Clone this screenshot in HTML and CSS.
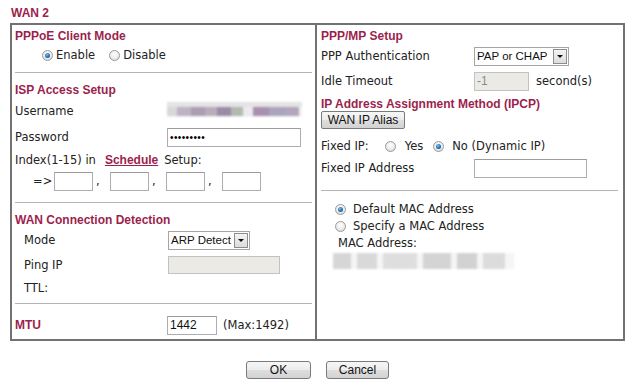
FILE: index.html
```html
<!DOCTYPE html>
<html lang="en">
<head>
  <meta charset="UTF-8" />
  <title>WAN 2 - PPPoE</title>
  <link rel="stylesheet" href="styles.css">
</head>
<body>
  <div class="page">
    <div class="title">WAN 2</div>

    <div class="panel">
      <!-- left side -->
      <div class="col col-left">
        <div class="head h20">PPPoE Client Mode</div>
        <div class="row h20 mode-opts">
          <span class="opt"><span class="radio on"></span>Enable</span>
          <span class="opt"><span class="radio"></span>Disable</span>
        </div>
        <div class="sep sep-1"></div>

        <div class="head h20">ISP Access Setup</div>
        <div class="row h24">
          <span class="label">Username</span>
          <span class="blur blur-user">
            <i class="b1"></i><i class="b2"></i><i class="b3"></i><i class="b4"></i><i class="b5"></i><i class="b6"></i><i class="b7"></i><i class="b8"></i><i class="b9"></i><i class="b10"></i>
          </span>
        </div>
        <div class="row h28">
          <span class="label">Password</span>
          <span class="box w134 pass">•••••••••</span>
        </div>
        <div class="row h18">
          <span>Index(1-15) in</span><a class="link" href="#">Schedule</a><span>Setup:</span>
        </div>
        <div class="row h24 index-row">
          <span class="arrow">=&gt;</span>
          <span class="box w39"></span><span class="comma">,</span>
          <span class="box w39"></span><span class="comma">,</span>
          <span class="box w39"></span><span class="comma">,</span>
          <span class="box w39"></span>
        </div>
        <div class="sep sep-2"></div>

        <div class="head h16">WAN Connection Detection</div>
        <div class="row h26">
          <span class="label sub">Mode</span>
          <span class="select w82 h18b">ARP Detect<span class="drop"></span></span>
        </div>
        <div class="row h24">
          <span class="label sub">Ping IP</span>
          <span class="box w112 h18b off"></span>
        </div>
        <div class="row h22">
          <span class="label sub">TTL:</span>
        </div>
        <div class="sep sep-3"></div>

        <div class="row h28">
          <span class="label mtu">MTU</span>
          <span class="box w50 val">1442</span>
          <span class="after">(Max:1492)</span>
        </div>
      </div>

      <!-- right side -->
      <div class="col col-right">
        <div class="head h20">PPP/MP Setup</div>
        <div class="row h22">
          <span class="label wide">PPP Authentication</span>
          <span class="select w95">PAP or CHAP<span class="drop"></span></span>
        </div>
        <div class="row h28">
          <span class="label wide">Idle Timeout</span>
          <span class="box w55 val off dim">-1</span>
          <span class="after unit">second(s)</span>
        </div>
        <div class="head h16">IP Address Assignment Method (IPCP)</div>
        <div class="row h26 top">
          <button class="btn alias">WAN IP Alias</button>
        </div>
        <div class="row h18 fixed">
          <span>Fixed IP:</span>
          <span class="opt"><span class="radio"></span>Yes</span>
          <span class="opt"><span class="radio on"></span>No (Dynamic IP)</span>
        </div>
        <div class="row h26">
          <span class="label wide">Fixed IP Address</span>
          <span class="box w113"></span>
        </div>
        <div class="sep sep-4"></div>

        <div class="row h18 mac-opt">
          <span class="opt"><span class="radio on"></span>Default MAC Address</span>
        </div>
        <div class="row h16 mac-opt">
          <span class="opt"><span class="radio"></span>Specify a MAC Address</span>
        </div>
        <div class="row h18 mac-label">MAC Address:</div>
        <div class="row h18 mac-val">
          <span class="blur blur-mac">
            <i class="m1"></i><i class="m2"></i><i class="m3"></i><i class="m4"></i><i class="m5"></i><i class="m6"></i>
          </span>
        </div>
      </div>
    </div>

    <div class="actions">
      <button class="btn ok">OK</button>
      <button class="btn cancel">Cancel</button>
    </div>
  </div>
</body>
</html>
```

FILE: styles.css
```css
* {
  box-sizing: border-box;
  margin: 0;
  padding: 0;
}

body {
  font-family: "DejaVu Sans", Verdana, sans-serif;
  font-size: 11.5px;
  color: #222;
  background: #fff;
}

.page {
  width: 640px;
  padding: 6px 10px 0;
}

.title {
  height: 17px;
  line-height: 16px;
  padding-left: 1px;
  font: bold 12px "Liberation Sans", Arial, sans-serif;
  color: #9c1f4d;
}

.panel {
  display: flex;
  width: 615px;
  height: 318px;
  border: 2px solid #727272;
}

.col-left {
  width: 305px;
  padding: 0 3px;
  border-right: 2px solid #727272;
}

.col-right {
  flex: 1;
  padding: 0 5px 0 4px;
}

.head {
  display: flex;
  align-items: center;
  padding-top: 1px;
  font: bold 12px "Liberation Sans", Arial, sans-serif;
  color: #9c1f4d;
}

.row {
  display: flex;
  align-items: center;
  white-space: nowrap;
}

.row.top {
  align-items: flex-start;
}

.h16 { height: 16px; }
.h18 { height: 18px; }
.h20 { height: 20px; }
.h22 { height: 22px; }
.h24 { height: 24px; }
.h26 { height: 26px; }
.h28 { height: 28px; }

.sep {
  border-top: 1px solid #b4b4b4;
}
.sep-1 { margin: 7px 0 6px; }
.sep-2 { margin: 9px 0 8px; }
.sep-3 { margin: 4px 0 7px; }
.sep-4 { margin: 9px 0 9px; }

.label {
  width: 152px;
  flex-shrink: 0;
}

.label.sub {
  width: 153px;
  padding-left: 9px;
}

.label.wide {
  width: 153px;
}

.label.mtu {
  font: bold 12px "Liberation Sans", Arial, sans-serif;
  color: #9c1f4d;
}

/* radio buttons */
.opt {
  display: inline-flex;
  align-items: center;
}

.radio {
  display: inline-block;
  width: 11px;
  height: 11px;
  border-radius: 50%;
  border: 1px solid #9a9a9a;
  background: radial-gradient(circle at 50% 35%, #fff 0%, #ececec 55%, #cdcdcd 100%);
  position: relative;
}

.radio.on::after {
  content: '';
  position: absolute;
  left: 2px;
  top: 2px;
  width: 5px;
  height: 5px;
  border-radius: 50%;
  background: radial-gradient(circle at 40% 35%, #7cc0ee 0%, #1f6fb5 55%, #0e3f6e 100%);
}

.mode-opts {
  padding-left: 27px;
}
.mode-opts .radio { margin-right: 3px; }
.mode-opts .opt + .opt { margin-left: 14px; }

.fixed .opt { margin-left: 16px; }
.fixed .radio { margin-right: 9px; }
.fixed .opt + .opt { margin-left: 10px; }
.fixed .opt + .opt .radio { margin-right: 8px; }

.mac-opt { padding-left: 14px; }
.mac-opt .radio { margin-right: 7px; }
.mac-label { padding-left: 17px; }
.mac-val { padding-left: 12px; }

/* text boxes */
.box {
  display: inline-block;
  height: 19px;
  border: 1px solid #abadb3;
  border-top-color: #9c9c9c;
  background: #fff;
  font: 12px "Liberation Sans", Arial, sans-serif;
  line-height: 17px;
  padding-left: 2px;
  color: #111;
  flex-shrink: 0;
}

.box.off {
  background: #ebeae5;
  border-color: #c2c2c2;
}

.box.dim {
  color: #8a8a8a;
}

.h18b { height: 18px; }

.w39 { width: 39px; }
.w50 { width: 50px; }
.w55 { width: 55px; }
.w82 { width: 82px; }
.w95 { width: 95px; }
.w112 { width: 112px; }
.w113 { width: 113px; }
.w134 { width: 134px; }

.pass {
  font-size: 10px;
  letter-spacing: 0.4px;
  line-height: 17px;
  color: #000;
}

.index-row {
  padding-left: 18px;
}

.arrow {
  width: 21px;
}

.comma {
  width: 17px;
  padding-left: 3px;
}

.link {
  margin: 0 6px 0 9px;
  font: bold 12px "Liberation Sans", Arial, sans-serif;
  color: #9c1f4d;
  text-decoration: underline;
}

.after {
  margin-left: 6px;
}

.after.unit {
  margin-left: 7px;
}

/* drop-down */
.select {
  position: relative;
  display: inline-block;
  height: 19px;
  border: 1px solid #a5a5a5;
  background: #fff;
  font: 11.5px "Liberation Sans", Arial, sans-serif;
  line-height: 17px;
  padding-left: 2px;
  color: #111;
}

.drop {
  position: absolute;
  right: 1px;
  top: 1px;
  bottom: 1px;
  width: 14px;
  border: 1px solid #8d8d8d;
  background: linear-gradient(#f4f4f4, #dcdcdc);
}

.drop::after {
  content: '';
  position: absolute;
  left: 3px;
  top: 5px;
  border-left: 3px solid transparent;
  border-right: 3px solid transparent;
  border-top: 3px solid #111;
}

/* blurred values */
.blur {
  display: flex;
  filter: blur(1.1px);
}

.blur i {
  display: block;
}

.blur-user {
  width: 135px;
  height: 22px;
  align-items: center;
  background: linear-gradient(#fff 0, #fff 2px, #e4e4e4 2px, #e4e4e4 7px, #f2f2f2 7px, #f2f2f2 17px, #fff 17px);
}

.blur-user i { height: 9px; }
.blur-user .b1 { width: 10px; background: #d8d8d8; }
.blur-user .b2 { width: 14px; background: #bdb3c2; }
.blur-user .b3 { width: 14px; background: #ab9db2; }
.blur-user .b4 { width: 12px; background: #b6aebd; }
.blur-user .b5 { width: 14px; background: #9c8ba7; }
.blur-user .b6 { width: 12px; background: #b3b9b1; }
.blur-user .b7 { width: 10px; background: #ebebeb; }
.blur-user .b8 { width: 16px; background: #a98fb0; }
.blur-user .b9 { width: 16px; background: #aaa5bc; }
.blur-user .b10 { width: 14px; background: #b3a5bd; }

.blur-mac {
  width: 181px;
  height: 16px;
  gap: 6px;
  background: #f5f5f5;
}

.blur-mac i { height: 16px; background: #d6d6d6; }
.blur-mac .m1 { width: 18px; }
.blur-mac .m2 { width: 20px; background: #d9d9d9; }
.blur-mac .m3 { width: 34px; background: #dedede; }
.blur-mac .m4 { width: 28px; background: #d4d4d4; }
.blur-mac .m5 { width: 20px; background: #d2d2d2; }
.blur-mac .m6 { width: 22px; background: #dcdcdc; }

/* buttons */
.btn {
  font: 12px "Liberation Sans", Arial, sans-serif;
  color: #111;
  border: 1px solid #7a7a7a;
  border-radius: 3px;
  background: linear-gradient(#f6f6f6, #ececec 50%, #dedede 51%, #d2d2d2);
  cursor: pointer;
}

.alias {
  width: 84px;
  height: 18px;
  border-radius: 2px;
}

.actions {
  display: flex;
  justify-content: center;
  gap: 15px;
  width: 615px;
  margin-top: 20px;
}

.ok {
  width: 65px;
  height: 18px;
}

.cancel {
  width: 63px;
  height: 18px;
}
```
